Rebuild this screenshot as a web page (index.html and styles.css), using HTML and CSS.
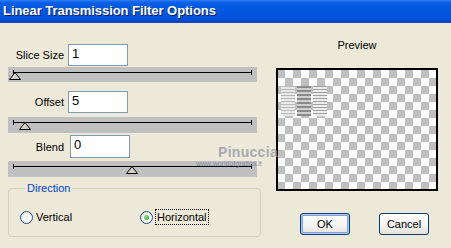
FILE: index.html
```html
<!DOCTYPE html>
<html>
<head>
<meta charset="utf-8">
<link rel="stylesheet" href="styles.css">
</head>
<body>
<div class="window">
  <div class="titlebar">Linear Transmission Filter Options</div>
  <div class="content">
    <div class="left">
      <div class="row row-slice">
        <span class="label">Slice Size</span>
        <span class="input">1</span>
      </div>
      <div class="track track-1">
        <div class="line"></div>
        <svg class="thumb" style="left:1px" width="12" height="8" viewBox="0 0 12 8"><path d="M6 0.5 L11.5 7.5 L0.5 7.5 Z" fill="#d4d0c8" stroke="#000" stroke-width="1"/></svg>
      </div>
      <div class="row row-offset">
        <span class="label">Offset</span>
        <span class="input">5</span>
      </div>
      <div class="track track-2">
        <div class="line"></div>
        <svg class="thumb" style="left:11px" width="12" height="8" viewBox="0 0 12 8"><path d="M6 0.5 L11.5 7.5 L0.5 7.5 Z" fill="#d4d0c8" stroke="#000" stroke-width="1"/></svg>
      </div>
      <div class="row row-blend">
        <span class="label">Blend</span>
        <span class="input input-blend">0</span>
      </div>
      <div class="track track-3">
        <div class="line"></div>
        <svg class="thumb" style="left:118px" width="12" height="8" viewBox="0 0 12 8"><path d="M6 0.5 L11.5 7.5 L0.5 7.5 Z" fill="#d4d0c8" stroke="#000" stroke-width="1"/></svg>
      </div>
      <fieldset class="group">
        <legend>Direction</legend>
        <div class="radios">
          <label class="radio"><span class="dot"></span><span class="rtext">Vertical</span></label>
          <label class="radio radio-h"><span class="dot checked"></span><span class="rtext focus">Horizontal</span></label>
        </div>
      </fieldset>
    </div>
    <div class="right">
      <div class="preview-label">Preview</div>
      <div class="preview">
        <div class="scramble">
          <div class="sc sc1"></div>
          <div class="sc sc2"></div>
          <div class="sc sc3"></div>
        </div>
      </div>
      <div class="buttons">
        <button class="btn btn-default">OK</button>
        <button class="btn">Cancel</button>
      </div>
    </div>
  </div>
  <div class="watermark">
    <div class="wm-big">Pinuccia</div>
    <div class="wm-small">www.worldofgrafica.it</div>
  </div>
</div>
</body>
</html>
```
FILE: styles.css
```css
* { box-sizing: border-box; }
html, body { margin: 0; padding: 0; }
body {
  width: 451px;
  height: 248px;
  background: #ece9d8;
  font-family: "Liberation Sans", Arial, sans-serif;
  font-size: 11px;
  color: #000;
  overflow: hidden;
}
.window { position: relative; width: 451px; height: 248px; }
.titlebar {
  height: 23px;
  background: linear-gradient(#2b7ef5 0%, #0a5fe6 12%, #0256e0 50%, #004fd8 85%, #0042b8 100%);
  color: #fff;
  font-weight: bold;
  font-size: 13px;
  line-height: 22px;
  padding-left: 3px;
  text-shadow: 1px 1px 0 #0a1f6e;
  letter-spacing: -0.05px;
}
.content { display: flex; }
.left { width: 259px; padding-left: 8px; padding-top: 21px; display: flex; flex-direction: column; }
.row { display: flex; align-items: center; height: 22px; }
.label { width: 56px; text-align: right; margin-right: 4px; font-size: 11px; }
.input {
  width: 60px; height: 22px;
  background: #fff;
  border: 1px solid #7f9db9;
  font-size: 13px;
  line-height: 18px;
  padding-left: 3px;
}
.row-offset { margin-top: 9px; }
.row-blend { margin-top: 2px; height: 23px; }
.input-blend { margin-left: 2px; height: 23px; }
.track {
  position: relative;
  width: 249px;
  height: 16px;
  background: #c0c0c0;
}
.track-1 { margin-top: 1px; height: 15px; }
.track-2 { margin-top: 4px; }
.track-3 { margin-top: 3px; }
.line {
  position: absolute;
  left: 5px; right: 5px; top: 5px;
  height: 1px;
  background: #000;
}
.line::before, .line::after {
  content: "";
  position: absolute;
  top: -2px;
  width: 1px; height: 5px;
  background: #000;
}
.line::before { left: 0; }
.line::after { right: 0; }
.thumb { position: absolute; top: 5px; }
.group {
  margin: 5px 0 0 0;
  padding: 0 0 0 11px;
  width: 251px;
  height: 55px;
  border: 1px solid #d0d0bf;
  border-radius: 4px;
}
.group legend {
  color: #0046d5;
  padding: 0 2px;
  margin-left: 5px;
  font-size: 11px;
  line-height: 13px;
}
.radios { display: flex; align-items: center; margin-top: 15px; }
.radio { display: flex; align-items: center; width: 120px; }
.dot {
  width: 13px; height: 13px;
  border-radius: 50%;
  border: 1px solid #1c5180;
  background: radial-gradient(circle at 60% 60%, #fff 30%, #dcd9cc 100%);
  display: inline-flex; align-items: center; justify-content: center;
  margin-right: 3px;
}
.dot.checked::after {
  content: "";
  width: 5px; height: 5px; border-radius: 50%;
  background: radial-gradient(circle at 35% 35%, #8fe38a, #21a121);
}
.rtext { font-size: 11px; }
.focus { outline: 1px dotted #000; outline-offset: 0; padding: 1px 1px; }
.right { width: 162px; margin-left: 17px; display: flex; flex-direction: column; }
.preview-label { text-align: center; margin-top: 16px; height: 14px; font-size: 11px; }
.preview {
  margin-top: 15px;
  width: 162px;
  height: 123px;
  border: 2px solid #000;
  background-color: #fff;
  background-image: conic-gradient(#c0c0c0 0 25%, #fff 0 50%, #c0c0c0 0 75%, #fff 0);
  background-size: 16px 16px;
  background-position: 7px 0;
  position: relative;
}
.scramble { display: flex; gap: 2px; margin-top: 16px; margin-left: 3px; }
.sc {
  width: 14px; height: 30px;
  background: repeating-linear-gradient(#b8b8b8 0 1px, #e8e8e8 1px 3px);
}
.sc2 { background: repeating-linear-gradient(#8a8a8a 0 2px, #cfcfcf 2px 4px); }
.sc3 { background: repeating-linear-gradient(#a0a0a0 0 1px, #ececec 1px 3px); }
.buttons { display: flex; gap: 29px; margin-top: 22px; padding-left: 24px; }
.btn {
  width: 50px; height: 22px;
  border: 1px solid #003c74;
  border-radius: 3px;
  background: linear-gradient(#ffffff, #f3f3ef 60%, #e3e2da);
  font-family: "Liberation Sans", Arial, sans-serif;
  font-size: 11px;
  color: #000;
  padding: 0;
}
.btn-default { box-shadow: inset 0 0 0 1px #a8c8f5, inset 0 0 0 2px #7ba2e7; }
.watermark { position: absolute; left: 196px; top: 145px; width: 84px; color: #9a9aaa; }
.wm-big { font-size: 14px; line-height: 15px; font-weight: bold; letter-spacing: 0.3px; opacity: 0.8; padding-left: 22px; }
.wm-small { font-size: 7px; line-height: 8px; color: #8c8c9c; }
```
